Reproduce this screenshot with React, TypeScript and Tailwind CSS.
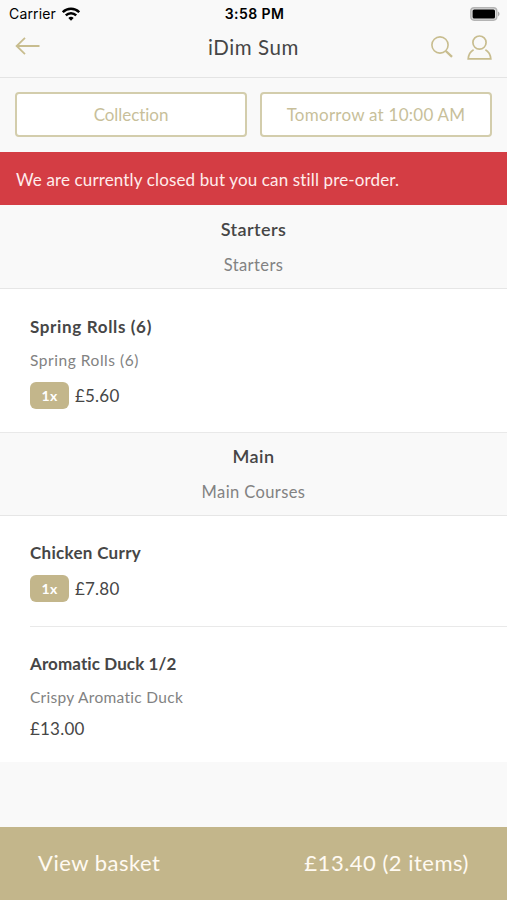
import type { ReactNode } from 'react'

function StatusBar() {
  return (
    <div className="h-7 grid grid-cols-3 items-center pl-[9px] pr-[7px] text-black font-['Inter','Liberation_Sans',sans-serif]">
      <div className="flex items-center gap-1.5 text-[14px] leading-none">
        <span className="tracking-[0.15px]">Carrier</span>
        <svg width="18" height="14" viewBox="0 0 18 14" fill="none" stroke="#000" strokeWidth="2.4">
          <path d="M0.8 5.2a11.6 11.6 0 0 1 16.4 0" />
          <path d="M3.8 8.4a7.3 7.3 0 0 1 10.4 0" />
          <path d="M9 13.8 6.3 11a3.8 3.8 0 0 1 5.4 0z" fill="#000" stroke="none" />
        </svg>
      </div>
      <span className="text-center text-[14px] leading-none font-semibold tracking-[0.4px]">3:58 PM</span>
      <svg className="justify-self-end mb-px" width="30" height="14" viewBox="0 0 30 14">
        <rect x="0.8" y="0.8" width="26" height="12.4" rx="3.4" fill="#ddd" stroke="#b4b4b4" strokeWidth="1.4" />
        <rect x="2.6" y="2.4" width="22.4" height="9.2" rx="1.6" fill="#000" />
        <path d="M28 4.6v4.8c2-.9 2-3.9 0-4.8z" fill="#aaa" />
      </svg>
    </div>
  )
}

function NavBar() {
  return (
    <header className="h-[50px] grid grid-cols-3 items-center px-[15px] pb-[11px] border-b border-[#e4e4e4]">
      <svg className="relative -top-px" width="26" height="20" viewBox="0 0 26 20" fill="none" stroke="#c8bd8f" strokeWidth="1.8">
        <path d="M24.5 10H1.5M10 1.8 1.6 10l8.4 8.2" />
      </svg>
      <h1 className="text-center text-[20.5px] tracking-[0.6px] leading-none whitespace-nowrap">iDim Sum</h1>
      <div className="flex justify-end gap-[13px]">
        <svg className="mt-px" width="24" height="26" viewBox="0 0 24 26" fill="none" stroke="#c8bd8f">
          <circle cx="10" cy="10" r="8.1" strokeWidth="1.6" />
          <path d="m15.8 16 6.2 5.8" strokeWidth="2.3" />
        </svg>
        <svg className="mt-px" width="25" height="26" viewBox="0 0 25 26" fill="none" stroke="#c8bd8f" strokeWidth="1.7">
          <circle cx="12.5" cy="7.6" r="6.6" />
          <path d="M6.6 14.8C3.3 16.6 1.6 19.6 1.2 23.8h22.6c-.4-4.2-2.1-7.2-5.4-9" />
        </svg>
      </div>
    </header>
  )
}

function SectionHeader({ title, subtitle }: { title: string; subtitle: string }) {
  return (
    <div className="pt-3 pb-[11px] text-center border-b border-[#e6e6e6]">
      <h2 className="text-[18px] leading-6 font-semibold tracking-[0.4px]">{title}</h2>
      <p className="mt-3 text-[16.5px] leading-6 text-[#828282] tracking-[0.4px]">{subtitle}</p>
    </div>
  )
}

function Price({ qty, children }: { qty?: number; children: ReactNode }) {
  return (
    <div className="flex items-center gap-1.5 h-[27px] text-[17px] tracking-[0.2px]">
      {qty && (
        <span className="w-[39px] h-[27px] rounded-md bg-[#c3b68b] text-white text-[14px] font-bold flex items-center justify-center">
          {qty}x
        </span>
      )}
      <span>{children}</span>
    </div>
  )
}

export default function App() {
  return (
    <div className="w-full h-[900px] flex flex-col bg-[#f9f9f9] text-[#464646] font-['Lato','Open_Sans',sans-serif] [font-variant-ligatures:none]">
      <StatusBar />
      <NavBar />

      <div className="h-[74px] shrink-0 px-[15px] pt-[14px] flex gap-[13px] text-[17px] text-[#c8bf9a]">
        <button className="flex-1 h-[45px] bg-white border-2 border-[#d3cdac] rounded-[4px] tracking-[-0.05px]">
          Collection
        </button>
        <button className="flex-1 h-[45px] bg-white border-2 border-[#d3cdac] rounded-[4px] tracking-[0.25px]">
          Tomorrow at 10:00 AM
        </button>
      </div>

      <div className="h-[53px] shrink-0 px-4 pt-0.5 flex items-center bg-[#d43d44] text-[#ffeceb] text-[17px] tracking-[0.14px]">
        We are currently closed but you can still pre-order.
      </div>

      <SectionHeader title="Starters" subtitle="Starters" />
      <div className="h-36 pl-[30px] pt-[26px] bg-white border-b border-[#e9e9e9]">
        <h3 className="text-[17px] leading-6 font-bold tracking-[0.65px]">Spring Rolls (6)</h3>
        <p className="mt-[9px] mb-[10px] text-[15.5px] leading-6 text-[#828282] tracking-[0.55px]">Spring Rolls (6)</p>
        <Price qty={1}>£5.60</Price>
      </div>

      <div className="-mt-px">
        <SectionHeader title="Main" subtitle="Main Courses" />
      </div>
      <div className="bg-white pl-[30px]">
        <div className="h-[111px] pt-[25px] border-b border-[#e9e9e9]">
          <h3 className="mb-[10px] text-[17px] leading-6 font-bold tracking-[0.3px]">Chicken Curry</h3>
          <Price qty={1}>£7.80</Price>
        </div>
        <div className="h-[135px] pt-[25px]">
          <h3 className="text-[17px] leading-6 font-bold tracking-[0.1px]">Aromatic Duck 1/2</h3>
          <p className="mt-[9px] mb-[6px] text-[15.5px] leading-6 text-[#828282] tracking-[0.3px]">Crispy Aromatic Duck</p>
          <Price>£13.00</Price>
        </div>
      </div>

      <footer className="mt-auto h-[73px] px-[38px] pb-0.5 flex items-center justify-between bg-[#c3b68b] text-[#fffaf2] text-[22px] tracking-[0.5px]">
        <span>View basket</span>
        <span>£13.40 (2 items)</span>
      </footer>
    </div>
  )
}
